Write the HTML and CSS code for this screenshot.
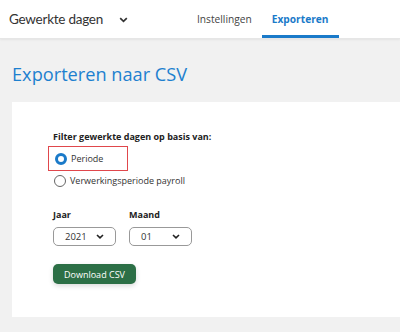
FILE: index.html
```html
<!DOCTYPE html>
<html lang="nl">
<head>
<meta charset="utf-8">
<link rel="stylesheet" href="styles.css">
</head>
<body>
<header class="topbar">
  <div class="app-switch">
    <span class="app-name">Gewerkte dagen</span>
    <svg class="chev" width="9" height="6" viewBox="0 0 9 6"><path d="M1.2 1.2 L4.5 4.4 L7.8 1.2" fill="none" stroke="#333" stroke-width="1.7"/></svg>
  </div>
  <nav class="tabs">
    <a class="tab">Instellingen</a>
    <a class="tab active">Exporteren</a>
  </nav>
</header>
<main class="page">
  <h1 class="title">Exporteren naar CSV</h1>
  <section class="card">
    <p class="label">Filter gewerkte dagen op basis van:</p>
    <div class="radios">
      <label class="radio focus"><span class="dot on"></span>Periode</label>
      <label class="radio"><span class="dot"></span>Verwerkingsperiode payroll</label>
    </div>
    <div class="fields">
      <div class="field">
        <span class="flabel">Jaar</span>
        <div class="select"><span>2021</span><svg width="8" height="5" viewBox="0 0 8 5"><path d="M1 1 L4 3.8 L7 1" fill="none" stroke="#222" stroke-width="1.6"/></svg></div>
      </div>
      <div class="field">
        <span class="flabel">Maand</span>
        <div class="select"><span>01</span><svg width="8" height="5" viewBox="0 0 8 5"><path d="M1 1 L4 3.8 L7 1" fill="none" stroke="#222" stroke-width="1.6"/></svg></div>
      </div>
    </div>
    <button class="btn">Download CSV</button>
  </section>
</main>
</body>
</html>
```
FILE: styles.css
```css
* { box-sizing: border-box; }
html, body { margin: 0; padding: 0; }
body {
  width: 400px;
  height: 332px;
  overflow: hidden;
  background: #f1f1f1;
  font-family: "Open Sans", "Noto Sans", sans-serif;
  color: #333;
}
.topbar {
  height: 39px;
  background: #fff;
  display: flex;
  align-items: stretch;
  box-shadow: 0 1px 2px rgba(0,0,0,0.06);
  border-bottom: 1px solid #e6e6e6;
}
.app-switch {
  display: flex;
  align-items: center;
  padding-left: 9px;
  width: 187px;
}
.app-name {
  font-family: "Lato", "Open Sans", sans-serif;
  font-size: 13.5px;
  letter-spacing: -0.25px;
  color: #333;
}
.chev { margin-left: 16px; margin-top: 2px; }
.tabs {
  display: flex;
  align-items: stretch;
}
.tab {
  display: flex;
  align-items: center;
  padding: 2px 10px 0;
  font-size: 10.2px;
  color: #444;
  border-bottom: 3px solid transparent;
}
.tab.active {
  color: #1a7ac9;
  font-weight: 700;
  border-bottom-color: #1a7ac9;
}
.page { padding: 0 0 0 12px; }
.title {
  margin: 0;
  padding: 22px 0 15px;
  font-weight: 400;
  font-size: 18.2px;
  line-height: 26px;
  color: #1d80cf;
}
.card {
  background: #fff;
  height: 215px;
  padding: 28px 0 0 41px;
}
.label {
  margin: 0 0 2px;
  font-size: 9px;
  line-height: 14px;
  font-weight: 700;
  color: #222;
}
.radios { display: flex; flex-direction: column; }
.radio {
  display: flex;
  align-items: center;
  font-size: 9px;
  color: #333;
  height: 19px;
  padding-left: 1px;
}
.radio.focus {
  width: 80px;
  height: 25px;
  margin-left: -5px;
  padding-left: 6px;
  border: 1.5px solid #e0474c;
}
.dot {
  width: 12px;
  height: 12px;
  border-radius: 50%;
  border: 1px solid #666;
  margin-right: 4px;
  background: #fff;
  flex: none;
}
.dot.on {
  border: 3.5px solid #1a7ac9;
}
.fields {
  display: flex;
  gap: 13px;
  margin-top: 18px;
}
.field { display: flex; flex-direction: column; gap: 6px; }
.flabel { font-size: 9px; line-height: 13px; font-weight: 700; color: #222; }
.select {
  width: 63px;
  height: 19px;
  border: 1px solid #999;
  border-radius: 5px;
  display: flex;
  align-items: center;
  justify-content: space-between;
  padding: 0 11px 0 11px;
  font-size: 9.5px;
  color: #333;
}
.btn {
  margin-top: 18px;
  display: block;
  height: 20px;
  padding: 0 11px;
  border: none;
  border-radius: 5px;
  background: #2c6f46;
  color: #fff;
  font-family: inherit;
  font-size: 9px;
  box-shadow: 0 2px 5px rgba(0,0,0,0.15);
}
```
